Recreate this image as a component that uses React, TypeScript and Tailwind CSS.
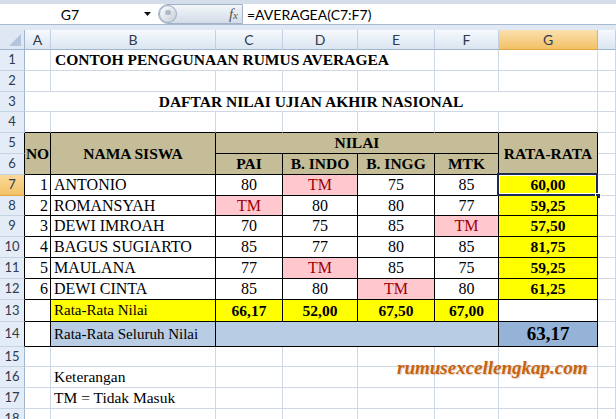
import React from "react";

const GL = "border-r border-b border-[#d0d7e5]";
const BK = "border-r border-b border-black";
const SER = "[font-family:'Liberation_Serif',serif]";
const HDRFONT = "[font-family:'Lato',sans-serif]";

function RH({ n, active = false, black = false }: { n: number; active?: boolean; black?: boolean }) {
  const bg = active
    ? "bg-linear-to-b from-[#f9d99a] to-[#f3c266] border-b-[#e0a844]"
    : "bg-[#e4ecf7] border-b-[#c5d3e3]";
  const br = black ? "border-r-black" : "border-r-[#9eb6ce]";
  return (
    <div
      className={`border-r border-b ${bg} ${br} flex items-center justify-center text-[13px] text-[#2f3a4c] ${HDRFONT}`}
    >
      {n}
    </div>
  );
}

function CH({ l, active = false }: { l: string; active?: boolean }) {
  const bg = active
    ? "bg-linear-to-b from-[#fae0ad] to-[#f2c163] border-r-[#e3b25a] border-b-[#e0a844]"
    : "bg-linear-to-b from-[#f6f9fd] to-[#dbe5f1] border-r-[#c2d0e1] border-b-[#9eb6ce]";
  return (
    <div className={`border-r border-b ${bg} flex items-center justify-center text-[14px] text-[#2f3a4c] ${HDRFONT}`}>
      {l}
    </div>
  );
}

const data: [number, string, string, string, string, string, string][] = [
  [1, "ANTONIO", "80", "TM", "75", "85", "60,00"],
  [2, "ROMANSYAH", "TM", "80", "80", "77", "59,25"],
  [3, "DEWI IMROAH", "70", "75", "85", "TM", "57,50"],
  [4, "BAGUS SUGIARTO", "85", "77", "80", "85", "81,75"],
  [5, "MAULANA", "77", "TM", "85", "75", "59,25"],
  [6, "DEWI CINTA", "85", "80", "TM", "80", "61,25"],
];

function Val({ v }: { v: string }) {
  const tm = v === "TM";
  return (
    <div
      className={`${BK} flex items-center justify-center text-[16px] ${SER} ${
        tm ? "bg-[#ffc7ce] text-[#9c0006]" : "bg-white text-black"
      }`}
    >
      {v}
    </div>
  );
}

function EmptyRow({ n }: { n: number }) {
  return (
    <>
      <RH n={n} />
      <div className={GL} />
      <div className={GL} />
      <div className={GL} />
      <div className={GL} />
      <div className={GL} />
      <div className={GL} />
      <div className={GL} />
      <div className={GL} />
    </>
  );
}

export default function App() {
  return (
    <div className="w-[616px] h-[419px] overflow-hidden bg-white">
      {/* Formula bar */}
      <div className="h-[30px] flex flex-col bg-[#dae4f0]">
        <div className="h-[4px] bg-[#d3deea]" />
        <div className="h-[21px] flex items-stretch bg-white border-b border-[#a7bad0]">
          <div className={`w-[140px] flex items-center justify-center text-[14px] text-black ${HDRFONT}`}>
            G7
          </div>
          <div className="w-[15px] flex items-center justify-center">
            <svg width="7" height="4" viewBox="0 0 7 4">
              <polygon points="0,0 7,0 3.5,4" fill="#111" />
            </svg>
          </div>
          <div className="w-[3px]" />
          <div className="w-[85px] flex items-center rounded-l-full border border-[#a3b3c7] bg-linear-to-b from-[#f3f6fa] to-[#d3dce7]">
            <div className="w-[18px] h-[18px] rounded-full border border-[#9eadc0] bg-linear-to-br from-[#ffffff] to-[#c3cdd9] flex items-start justify-start">
              <div className="w-[6px] h-[5px] rounded-full bg-[#8e9bab] ml-[5px] mt-[4px] opacity-60" />
            </div>
            <div className="flex-1" />
            <div className={`text-[15px] italic text-[#555] ${SER} mr-[4px] leading-none`}>
              f<span className="text-[11px]">x</span>
            </div>
          </div>
          <div className={`pl-[4px] flex items-center text-[14px] text-black ${HDRFONT}`}>
            =AVERAGEA(C7:F7)
          </div>
        </div>
        <div className="flex-1 bg-[#dfe8f3]" />
      </div>

      {/* Sheet */}
      <div className="relative h-[389px] overflow-hidden">
        <div className="grid grid-cols-[25px_26px_165px_67px_75px_77px_64px_99px_18px] grid-rows-[20px_21px_21px_20px_21px_21px_21px_21px_20px_21px_21px_21px_21px_22px_25px_20px_21px_21px_21px]">
          {/* Column headers */}
          <div className="border-r border-b border-r-[#9eb6ce] border-b-[#9eb6ce] bg-[#dfe7f2] flex items-end justify-end">
            <svg width="14" height="14" viewBox="0 0 14 14" className="mb-[2px] mr-[2px]">
              <polygon points="13,1 13,13 1,13" fill="#b3c5db" />
            </svg>
          </div>
          <CH l="A" />
          <CH l="B" />
          <CH l="C" />
          <CH l="D" />
          <CH l="E" />
          <CH l="F" />
          <CH l="G" active />
          <CH l="" />

          {/* Row 1 */}
          <RH n={1} />
          <div className={GL} />
          <div className={`col-span-4 border-b border-r border-[#d0d7e5] flex items-center pl-[4px] text-[15.5px] font-bold whitespace-nowrap ${SER}`}>
            CONTOH PENGGUNAAN RUMUS AVERAGEA
          </div>
          <div className={GL} />
          <div className={GL} />
          <div className={GL} />

          {/* Row 2 */}
          <EmptyRow n={2} />

          {/* Row 3 */}
          <RH n={3} />
          <div className={`col-span-7 border-b border-r border-[#d0d7e5] flex items-center justify-center text-[15.5px] font-bold whitespace-nowrap ${SER}`}>
            DAFTAR NILAI UJIAN AKHIR NASIONAL
          </div>
          <div className={GL} />

          {/* Row 4 */}
          <RH n={4} />
          <div className="border-r border-b border-r-[#d0d7e5] border-b-black" />
          <div className="border-r border-b border-r-[#d0d7e5] border-b-black" />
          <div className="border-r border-b border-r-[#d0d7e5] border-b-black" />
          <div className="border-r border-b border-r-[#d0d7e5] border-b-black" />
          <div className="border-r border-b border-r-[#d0d7e5] border-b-black" />
          <div className="border-r border-b border-r-[#d0d7e5] border-b-black" />
          <div className="border-r border-b border-r-[#d0d7e5] border-b-black" />
          <div className={GL} />

          {/* Row 5 */}
          <RH n={5} black />
          <div className={`row-span-2 ${BK} bg-[#c4bd97] flex items-center justify-center text-[15.5px] font-bold ${SER}`}>
            NO
          </div>
          <div className={`row-span-2 ${BK} bg-[#c4bd97] flex items-center justify-center text-[15.5px] font-bold ${SER}`}>
            NAMA SISWA
          </div>
          <div className={`col-span-4 ${BK} bg-[#c4bd97] flex items-center justify-center text-[15.5px] font-bold ${SER}`}>
            NILAI
          </div>
          <div className={`row-span-2 ${BK} bg-[#c4bd97] flex items-center justify-center text-[15.5px] font-bold ${SER}`}>
            RATA-RATA
          </div>
          <div className={GL} />

          {/* Row 6 */}
          <RH n={6} black />
          <div className={`${BK} bg-[#c4bd97] flex items-center justify-center text-[15.5px] font-bold ${SER}`}>PAI</div>
          <div className={`${BK} bg-[#c4bd97] flex items-center justify-center text-[15.5px] font-bold ${SER}`}>B. INDO</div>
          <div className={`${BK} bg-[#c4bd97] flex items-center justify-center text-[15.5px] font-bold ${SER}`}>B. INGG</div>
          <div className={`${BK} bg-[#c4bd97] flex items-center justify-center text-[15.5px] font-bold ${SER}`}>MTK</div>
          <div className={GL} />

          {/* Rows 7-12 */}
          {data.map((r, i) => (
            <React.Fragment key={i}>
              <RH n={7 + i} active={i === 0} black />
              <div className={`${BK} flex items-center justify-end pr-[2px] text-[16px] ${SER}`}>{r[0]}</div>
              <div className={`${BK} flex items-center pl-[3px] text-[16px] whitespace-nowrap ${SER}`}>{r[1]}</div>
              <Val v={r[2]} />
              <Val v={r[3]} />
              <Val v={r[4]} />
              <Val v={r[5]} />
              <div className={`relative ${BK} bg-[#ffff00] flex items-center justify-center text-[15.5px] font-bold ${SER}`}>
                {r[6]}
                {i === 0 && (
                  <>
                    <div className="absolute left-[-2px] top-[-2px] right-[-1px] bottom-[-1px] border-2 border-[#1b2a57] shadow-[inset_0_0_0_1px_#ffffff]" />
                    <div className="absolute right-[-4px] bottom-[-4px] w-[6px] h-[6px] bg-[#1b2a57] border border-white" />
                  </>
                )}
              </div>
              <div className={GL} />
            </React.Fragment>
          ))}

          {/* Row 13 */}
          <RH n={13} black />
          <div className={`${BK} bg-white`} />
          <div className={`${BK} bg-[#ffff00] flex items-center pl-[3px] text-[15px] whitespace-nowrap ${SER}`}>Rata-Rata Nilai</div>
          <div className={`${BK} bg-[#ffff00] flex items-center justify-center text-[15.5px] font-bold ${SER}`}>66,17</div>
          <div className={`${BK} bg-[#ffff00] flex items-center justify-center text-[15.5px] font-bold ${SER}`}>52,00</div>
          <div className={`${BK} bg-[#ffff00] flex items-center justify-center text-[15.5px] font-bold ${SER}`}>67,50</div>
          <div className={`${BK} bg-[#ffff00] flex items-center justify-center text-[15.5px] font-bold ${SER}`}>67,00</div>
          <div className={`${BK} bg-white`} />
          <div className={GL} />

          {/* Row 14 */}
          <RH n={14} black />
          <div className={`${BK} bg-white`} />
          <div className={`${BK} bg-[#b8cce4] flex items-center pl-[3px] text-[15px] whitespace-nowrap ${SER}`}>Rata-Rata Seluruh Nilai</div>
          <div className={`col-span-4 ${BK} bg-[#b8cce4]`} />
          <div className={`${BK} bg-[#95b3d7] flex items-center justify-center text-[19px] font-bold ${SER}`}>63,17</div>
          <div className={GL} />

          {/* Row 15 */}
          <EmptyRow n={15} />

          {/* Row 16 */}
          <RH n={16} />
          <div className={GL} />
          <div className={`${GL} flex items-center pl-[3px] text-[15.5px] whitespace-nowrap ${SER}`}>Keterangan</div>
          <div className={GL} />
          <div className={GL} />
          <div className={GL} />
          <div className={GL} />
          <div className={GL} />
          <div className={GL} />

          {/* Row 17 */}
          <RH n={17} />
          <div className={GL} />
          <div className={`${GL} flex items-center pl-[3px] text-[15.5px] whitespace-nowrap ${SER}`}>TM = Tidak Masuk</div>
          <div className={GL} />
          <div className={GL} />
          <div className={GL} />
          <div className={GL} />
          <div className={GL} />
          <div className={GL} />

          {/* Row 18 */}
          <EmptyRow n={18} />
        </div>

        {/* Watermark */}
        <div
          className={`absolute left-[397px] top-[324px] text-[19px] font-bold italic text-[#c8630f] whitespace-nowrap ${SER} [text-shadow:1px_1px_1px_rgba(120,60,0,0.25)]`}
        >
          rumusexcellengkap.com
        </div>
      </div>
    </div>
  );
}
